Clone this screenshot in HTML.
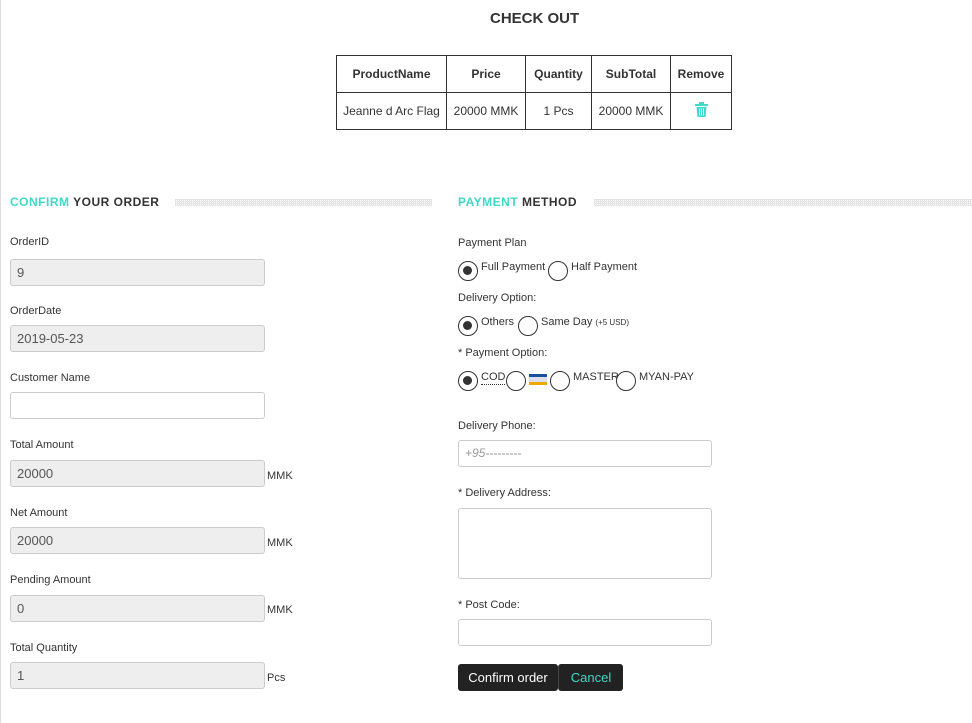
<!DOCTYPE html>
<html><head><meta charset="utf-8"><style>
body{margin:0;width:972px;height:723px;background:#fff;font-family:"Liberation Sans",sans-serif;color:#333;position:relative;overflow:hidden}
.a{position:absolute}
.lbl{position:absolute;font-size:11px;color:#333}
.in{position:absolute;box-sizing:border-box;height:27px;border:1px solid #ccc;border-radius:3px;background:#eee;font-size:13px;color:#555;padding:5px 6px}
.w{background:#fff}
.rad{position:absolute;box-sizing:border-box;width:20px;height:20px;border:1.5px solid #333;border-radius:50%;background:#fff}
.rad.on::after{content:"";position:absolute;left:4px;top:4px;width:9px;height:9px;border-radius:50%;background:#333}
.h{position:absolute;font-size:12px;font-weight:bold;letter-spacing:.5px;color:#333}
.h span{color:#40d9c8}
.dots{position:absolute;height:7px;background:repeating-linear-gradient(90deg,#ddd 0 1px,transparent 1px 2px),repeating-linear-gradient(0deg,#ddd 0 1px,transparent 1px 2px);opacity:.8}
table{position:absolute;left:336px;top:55px;border-collapse:collapse;font-size:12px}
td,th{border:1px solid #333;text-align:center;padding:0}
th{height:36px;font-size:12px}td{height:36px}
</style></head><body>
<div class="a" style="left:0;top:0;width:1px;height:723px;background:#ddd"></div>
<div class="a" style="left:490px;top:10px;font-size:15px;font-weight:bold">CHECK OUT</div>
<table><tr><th style="width:109px">ProductName</th><th style="width:78px">Price</th><th style="width:65px">Quantity</th><th style="width:78px">SubTotal</th><th style="width:60px">Remove</th></tr>
<tr><td>Jeanne d Arc Flag</td><td>20000 MMK</td><td>1 Pcs</td><td>20000 MMK</td><td><svg width="13" height="15" viewBox="0 0 13 15"><rect x="0" y="2" width="13" height="2" fill="#40d9c8"/><rect x="4" y="0" width="5" height="2" fill="#40d9c8"/><path d="M1.5 5h10l-1 10h-8z" fill="#40d9c8"/><path d="M4.5 6.5v7M6.5 6.5v7M8.5 6.5v7" stroke="#fff" stroke-width="1"/></svg></td></tr></table>

<div class="h" style="left:10px;top:195px"><span>CONFIRM</span> YOUR ORDER</div>
<div class="dots" style="left:175px;top:199px;width:257px"></div>
<div class="h" style="left:458px;top:195px"><span>PAYMENT</span> METHOD</div>
<div class="dots" style="left:594px;top:199px;width:378px"></div>

<div class="lbl" style="left:10px;top:236px">OrderID</div><div class="in" style="left:10px;top:259px;width:255px">9</div>
<div class="lbl" style="left:10px;top:305px">OrderDate</div><div class="in" style="left:10px;top:325px;width:255px">2019-05-23</div>
<div class="lbl" style="left:10px;top:372px">Customer Name</div><div class="in w" style="left:10px;top:392px;width:255px"></div>
<div class="lbl" style="left:10px;top:439px">Total Amount</div><div class="in" style="left:10px;top:460px;width:255px">20000</div><div class="lbl" style="left:267px;top:470px">MMK</div>
<div class="lbl" style="left:10px;top:507px">Net Amount</div><div class="in" style="left:10px;top:527px;width:255px">20000</div><div class="lbl" style="left:267px;top:537px">MMK</div>
<div class="lbl" style="left:10px;top:574px">Pending Amount</div><div class="in" style="left:10px;top:595px;width:255px">0</div><div class="lbl" style="left:267px;top:604px">MMK</div>
<div class="lbl" style="left:10px;top:642px">Total Quantity</div><div class="in" style="left:10px;top:662px;width:255px">1</div><div class="lbl" style="left:267px;top:672px">Pcs</div>

<div class="lbl" style="left:458px;top:237px">Payment Plan</div>
<div class="rad on" style="left:458px;top:261px"></div><div class="lbl" style="left:481px;top:261px">Full Payment</div>
<div class="rad" style="left:548px;top:261px"></div><div class="lbl" style="left:571px;top:261px">Half Payment</div>
<div class="lbl" style="left:458px;top:292px">Delivery Option:</div>
<div class="rad on" style="left:458px;top:316px"></div><div class="lbl" style="left:481px;top:316px">Others</div>
<div class="rad" style="left:518px;top:316px"></div><div class="lbl" style="left:541px;top:316px">Same Day <span style="font-size:8px">(+5 USD)</span></div>
<div class="lbl" style="left:458px;top:347px">* Payment Option:</div>
<div class="rad on" style="left:458px;top:371px"></div><div class="lbl" style="left:481px;top:371px;border-bottom:1px dotted #333;line-height:13px">COD</div>
<div class="rad" style="left:506px;top:371px"></div>
<div class="a" style="left:529px;top:374px;width:18px;height:11px;background:#fff"><div style="height:3px;background:#1a4f9c"></div><div style="height:5px;background:#dde"></div><div style="height:3px;background:#f0a800"></div></div>
<div class="rad" style="left:550px;top:371px"></div><div class="lbl" style="left:573px;top:371px">MASTER</div>
<div class="rad" style="left:616px;top:371px"></div><div class="lbl" style="left:639px;top:371px">MYAN-PAY</div>

<div class="lbl" style="left:458px;top:420px">Delivery Phone:</div>
<div class="in w" style="left:458px;top:440px;width:254px;color:#999;font-style:italic;font-size:12px">+95---------</div>
<div class="lbl" style="left:458px;top:487px">* Delivery Address:</div>
<div class="in w" style="left:458px;top:508px;width:254px;height:71px"></div>
<div class="lbl" style="left:458px;top:599px">* Post Code:</div>
<div class="in w" style="left:458px;top:619px;width:254px"></div>
<div class="a" style="left:458px;top:664px;width:100px;height:27px;background:#222;border-radius:3px;color:#fff;font-size:13px;line-height:27px;text-align:center">Confirm order</div>
<div class="a" style="left:558px;top:664px;width:64px;height:27px;background:#222;border-radius:3px;color:#40d9c8;font-size:13px;line-height:27px;text-align:center;border-left:1px solid #444">Cancel</div>
</body></html>
